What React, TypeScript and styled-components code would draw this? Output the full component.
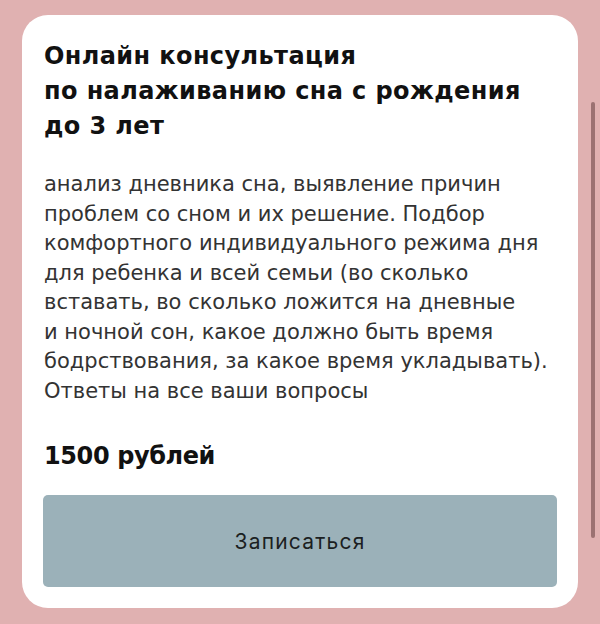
import React from "react";
import styled, { createGlobalStyle } from "styled-components";

const GlobalStyle = createGlobalStyle`
  html, body {
    margin: 0;
    padding: 0;
    background: #e0b1b1;
  }
  #root {
    min-height: 624px;
  }
`;

const Page = styled.div`
  position: relative;
  box-sizing: border-box;
  width: 600px;
  height: 624px;
  padding: 15px 22px 16px 22px;
  background: #e0b1b1;
`;

const Card = styled.section`
  box-sizing: border-box;
  height: 593px;
  background: #ffffff;
  border-radius: 26px;
  padding: 24px 21px 21px 21px;
  display: flex;
  flex-direction: column;
`;

const Title = styled.h2`
  margin: 0 0 0 1px;
  font-family: "DejaVu Sans", Inter, sans-serif;
  font-weight: 700;
  font-size: 24px;
  line-height: 35px;
  letter-spacing: 0.4px;
  color: #111111;
`;

const Description = styled.div`
  margin: 26px 0 0 1px;
  font-family: "DejaVu Sans", Inter, sans-serif;
  font-weight: 400;
  font-size: 21px;
  line-height: 29.5px;
  color: #333333;
`;

const Line = styled.span`
  display: block;
  white-space: nowrap;
`;

const Price = styled.div`
  margin: 33px 0 0 1px;
  font-family: "DejaVu Sans", Inter, sans-serif;
  font-weight: 700;
  font-size: 24px;
  line-height: 34px;
  letter-spacing: -0.4px;
  color: #111111;
`;

const BookButton = styled.button`
  margin-top: auto;
  height: 92px;
  width: 100%;
  border: none;
  border-radius: 5px;
  background: #9bb1b9;
  color: #1b1f22;
  font-family: Inter, Roboto, sans-serif;
  font-size: 21px;
  letter-spacing: 1.2px;
  cursor: pointer;
`;

const ScrollThumb = styled.div`
  position: absolute;
  left: 591px;
  top: 102px;
  width: 4px;
  height: 436px;
  border-radius: 2px;
  background: #9b7272;
`;

const titleLines = ["Онлайн консультация", "по налаживанию сна с рождения", "до 3 лет"];

const descriptionLines = [
  "анализ дневника сна, выявление причин",
  "проблем со сном и их решение. Подбор",
  "комфортного индивидуального режима дня",
  "для ребенка и всей семьи (во сколько",
  "вставать, во сколько ложится на дневные",
  "и ночной сон, какое должно быть время",
  "бодрствования, за какое время укладывать).",
  "Ответы на все ваши вопросы",
];

export default function App() {
  return (
    <>
      <GlobalStyle />
      <Page>
        <Card>
          <Title>
            {titleLines.map((line) => (
              <Line key={line}>{line}</Line>
            ))}
          </Title>
          <Description>
            {descriptionLines.map((line) => (
              <Line key={line}>{line}</Line>
            ))}
          </Description>
          <Price>1500 рублей</Price>
          <BookButton type="button">Записаться</BookButton>
        </Card>
        <ScrollThumb />
      </Page>
    </>
  );
}
